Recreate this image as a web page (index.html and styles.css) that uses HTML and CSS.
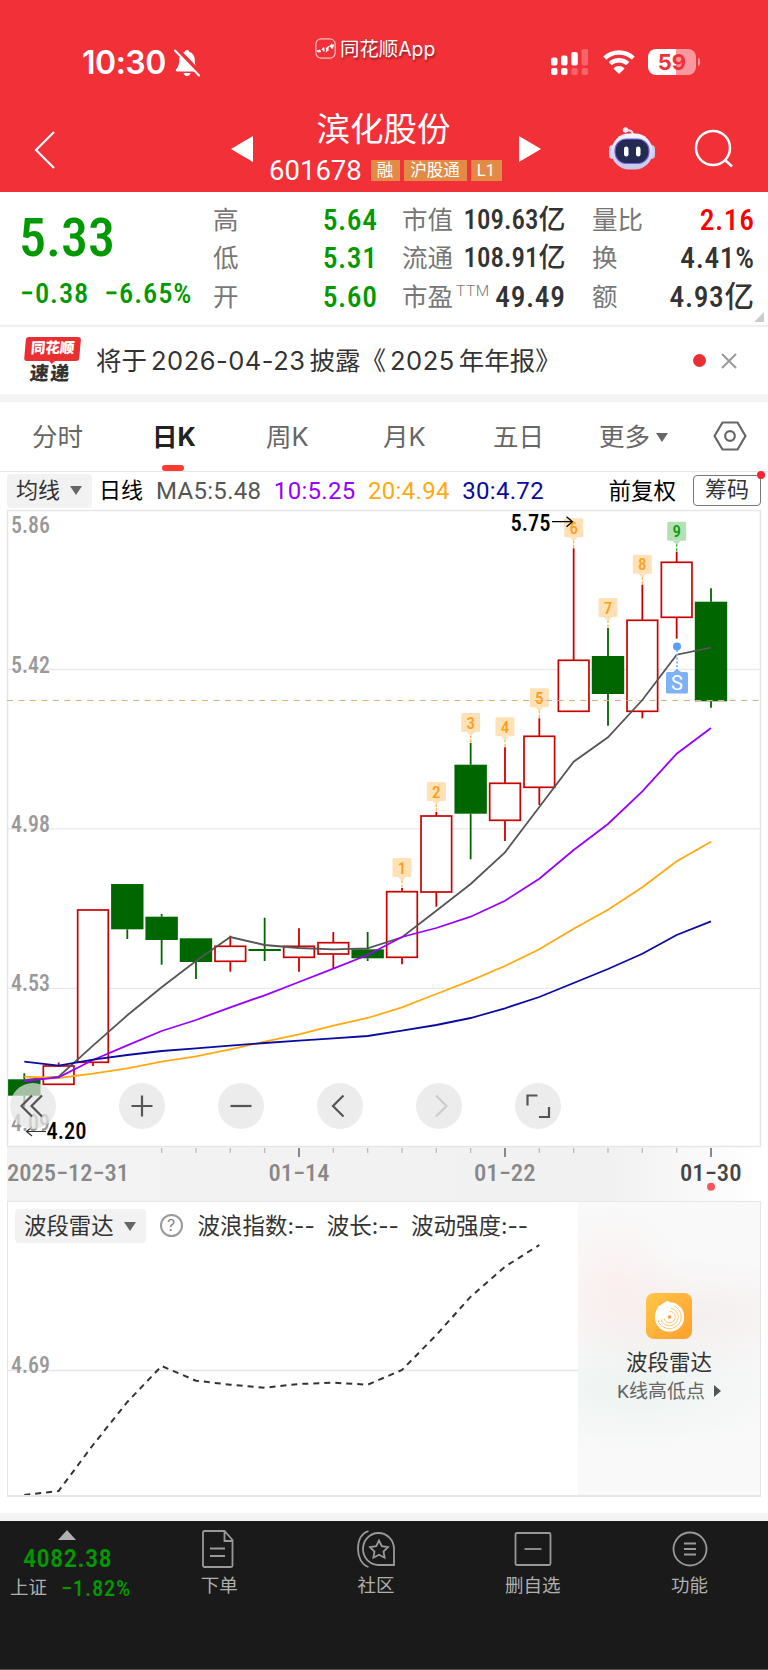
FILE: index.html
```html
<!DOCTYPE html>
<html lang="zh-CN">
<head>
  <meta charset="UTF-8" />
  <meta name="viewport" content="width=device-width, initial-scale=1.0" />
  <title>滨化股份 601678</title>
  <link rel="stylesheet" href="styles.css">
</head>
<body>
  <header class="header">
    <div class="status-bar">
      <div class="clock">
        <span class="time">10:30</span>
        <svg class="bell" width="28" height="28" viewBox="0 0 28 28">
          <path fill="#fff" d="M14 1c1.300 0 2.200.8 2.500 2 3.500 1 5.300 4 5.300 8 0 6 1.700 7.500 3.200 9.500.7 1-.1 2-1.200 2H4.200c-1.100 0-1.900-1-1.200-2C4.500 18.500 6.200 17 6.200 11c0-4 1.800-7 5.300-8C11.800 1.800 12.700 1 14 1zM10.500 24h7c-.3 1.900-1.700 3-3.500 3s-3.200-1.100-3.500-3z"/>
          <path d="M4 0L28 25" stroke="#f23038" stroke-width="4"/>
          <path d="M2 1.500L26 26.500" stroke="#fff" stroke-width="2" stroke-linecap="round"/>
        </svg>
      </div>
      <div class="app-mark">
        <svg width="21" height="21" viewBox="0 0 21 21">
          <rect x=".8" y=".8" width="19.400" height="19.400" rx="5.500" fill="none" stroke="#fff" stroke-opacity=".7" stroke-width="1.300"/>
          <path d="M2 12.500l1.500 1 1-1 1 1.500M7 12l1.500-1.500.5 3M11 11l2-1.500-1 3 1.500-1M15 9l1.500-2 .5 3.500 1.500-4" fill="none" stroke="#fff" stroke-width="1.600"/>
        </svg>
        <span>同花顺App</span>
      </div>
      <div class="indicators">
        <svg width="38" height="26" viewBox="0 0 38 26" fill="#fff">
          <rect x="0" y="8.500" width="6.500" height="8" rx="2"/>
          <rect x="10" y="6.500" width="6.500" height="10" rx="2"/>
          <rect x="20.300" y="3" width="6.500" height="13.500" rx="2"/>
          <rect x="30.600" y="0" width="6.500" height="16.500" rx="2" opacity=".25"/>
          <rect x="0" y="19" width="6.500" height="7" rx="2"/>
          <rect x="10" y="19" width="6.500" height="7" rx="2"/>
          <rect x="20.300" y="19" width="6.500" height="7" rx="2" opacity=".25"/>
          <rect x="30.600" y="19" width="6.500" height="7" rx="2" opacity=".25"/>
        </svg>
        <svg width="32" height="24" viewBox="0 0 32 24">
          <path d="M1.800 8.200a20.500 20.500 0 0 1 28.400 0M7.200 13.700a12.800 12.800 0 0 1 17.600 0" fill="none" stroke="#fff" stroke-width="4.400"/>
          <path d="M16 24l-5.600-5.600a8 8 0 0 1 11.200 0z" fill="#fff"/>
        </svg>
        <div class="battery"><span>59</span></div>
      </div>
    </div>
    <div class="title-bar">
      <svg class="back" width="22" height="40" viewBox="0 0 22 40"><path d="M20 2L2 20l18 18" fill="none" stroke="#fff" stroke-width="2.200"/></svg>
      <svg class="prev" width="22" height="26" viewBox="0 0 22 26"><path d="M22 0v26L0 13z" fill="#fff"/></svg>
      <div class="stock">
        <h1>滨化股份</h1>
        <div class="stock-code">
          <span class="code">601678</span>
          <span class="tag">融</span>
          <span class="tag">沪股通</span>
          <span class="tag">L1</span>
        </div>
      </div>
      <svg class="next" width="22" height="26" viewBox="0 0 22 26"><path d="M0 0v26l22-13z" fill="#fff"/></svg>
      <svg class="robot" width="46" height="43" viewBox="0 0 46 43">
        <defs>
          <linearGradient id="shell" x1="0" y1="0" x2="0" y2="1">
            <stop offset="0" stop-color="#f4f5ff"/>
            <stop offset="1" stop-color="#c3c8ec"/>
          </linearGradient>
        </defs>
        <path d="M17 3.500c4-1 6.500.5 7 4" fill="none" stroke="#dfe1fa" stroke-width="2"/>
        <circle cx="16.500" cy="3" r="2.700" fill="#e8eafc"/>
        <rect x="0" y="18" width="8" height="14" rx="4" fill="#c9cdf0"/>
        <rect x="38" y="18" width="8" height="14" rx="4" fill="#c9cdf0"/>
        <rect x="2.500" y="6.500" width="41" height="36" rx="17.500" fill="url(#shell)"/>
        <rect x="6" y="12" width="34" height="24.500" rx="11.500" fill="#232b52" stroke="#7d5fe0" stroke-width="1.200"/>
        <rect x="15" y="19.500" width="4.500" height="10" rx="2.200" fill="#fff"/>
        <rect x="27" y="19.500" width="4.500" height="10" rx="2.200" fill="#fff"/>
      </svg>
      <svg class="search" width="40" height="40" viewBox="0 0 40 40"><g fill="none" stroke="#fff" stroke-width="2.500"><circle cx="19" cy="19" r="17"/><path d="M31 31l7 6.500"/></g></svg>
    </div>
  </header>

  <section class="quote">
    <div class="price-box">
      <div class="price down">5.33</div>
      <div class="change down"><span>−0.38</span><span>−6.65%</span></div>
    </div>
    <dl class="stats stats-a">
      <dt>高</dt><dd class="down">5.64</dd>
      <dt>低</dt><dd class="down">5.31</dd>
      <dt>开</dt><dd class="down">5.60</dd>
    </dl>
    <dl class="stats stats-b">
      <dt>市值</dt><dd class="long">109.63亿</dd>
      <dt>流通</dt><dd class="long">108.91亿</dd>
      <dt>市盈<sup>TTM</sup></dt><dd>49.49</dd>
    </dl>
    <dl class="stats stats-c">
      <dt>量比</dt><dd class="up">2.16</dd>
      <dt>换</dt><dd>4.41%</dd>
      <dt>额</dt><dd>4.93亿</dd>
    </dl>
    <i class="corner"></i>
  </section>

  <section class="news">
    <div class="news-logo"><b>同花顺</b><em>速递</em></div>
    <p>将于<span class="d">2026-04-23</span>披露《<span class="d">2025</span>年年报》</p>
    <i class="dot"></i>
    <svg width="16" height="16" viewBox="0 0 16 16"><path d="M1 1l14 14M15 1L1 15" stroke="#999" stroke-width="2"/></svg>
  </section>

  <nav class="periods">
    <a>分时</a>
    <a class="active">日K</a>
    <a>周K</a>
    <a>月K</a>
    <a>五日</a>
    <a class="more">更多<i class="caret"></i></a>
    <svg width="34" height="30" viewBox="0 0 34 30"><g fill="none" stroke="#666" stroke-width="2.200"><path d="M9.500 1.500h15L32.500 15l-8 13.500h-15L1.500 15z" stroke-linejoin="round"/><circle cx="17" cy="15" r="4.800"/></g></svg>
  </nav>

  <div class="ma-row">
    <span class="select">均线<i class="caret"></i></span>
    <span class="line-name">日线</span>
    <span class="ma ma5">MA5:5.48</span>
    <span class="ma ma10">10:5.25</span>
    <span class="ma ma20">20:4.94</span>
    <span class="ma ma30">30:4.72</span>
    <span class="adjust">前复权</span>
    <span class="chips">筹码</span>
  </div>

  <section class="chart">
    <svg id="kline" width="768" height="692" viewBox="0 509 768 692"></svg>
    <div class="tools">
      <button><svg viewBox="0 0 46 46"><path d="M22 12.500L11.500 23 22 33.500M32 12.500L21.500 23 32 33.500"/></svg></button>
      <button><svg viewBox="0 0 46 46"><path d="M23 12.500v21M12.500 23h21"/></svg></button>
      <button><svg viewBox="0 0 46 46"><path d="M12.500 23h21"/></svg></button>
      <button><svg viewBox="0 0 46 46"><path d="M26.500 12.500L16 23l10.500 10.500"/></svg></button>
      <button class="off"><svg viewBox="0 0 46 46"><path d="M20 12.500L30.500 23 20 33.500"/></svg></button>
      <button><svg viewBox="0 0 46 46"><path d="M12.500 22.500V12.500h10M24 34h10V24"/></svg></button>
    </div>
  </section>

  <section class="radar">
    <div class="radar-main">
      <div class="radar-head">
        <span class="select">波段雷达<i class="caret"></i></span>
        <span class="help">?</span>
        <span>波浪指数:--</span>
        <span>波长:--</span>
        <span>波动强度:--</span>
      </div>
      <svg id="wave" width="570" height="252" viewBox="8 1243 570 252"></svg>
    </div>
    <aside class="radar-card">
      <svg width="46" height="46" viewBox="0 0 46 46">
        <defs>
          <linearGradient id="gold" x1="0" y1="0" x2="1" y2="1">
            <stop offset="0" stop-color="#ffc648"/>
            <stop offset="1" stop-color="#ff9f2c"/>
          </linearGradient>
        </defs>
        <rect width="46" height="46" rx="8" fill="url(#gold)"/>
        <circle cx="23.500" cy="24" r="14.700" fill="#fff"/>
        <path d="M11 14.500l9-6 3-.5v6z" fill="#fff"/>
        <g fill="none" stroke="#ffbd5c" stroke-width=".9">
          <path d="M23.500 18.300a5.700 5.700 0 1 1-5.500 7"/>
          <path d="M25 15.300a8.800 8.800 0 1 1-10 11"/>
          <path d="M28 13a11.800 11.800 0 1 1-16 14"/>
        </g>
        <circle cx="23.500" cy="24" r="1.800" fill="#ff9f2c"/>
      </svg>
      <strong>波段雷达</strong>
      <span>K线高低点<i></i></span>
    </aside>
  </section>

  <footer class="bottom-bar">
    <div class="index">
      <i></i>
      <b>4082.38</b>
      <div><span>上证</span><em>−1.82%</em></div>
    </div>
    <a>
      <svg width="39" height="38" viewBox="0 0 39 38"><path d="M4.500 1h20l8 9v25.500a1.500 1.500 0 0 1-1.500 1.500H4.500A1.500 1.500 0 0 1 3 35.500v-33A1.500 1.500 0 0 1 4.500 1zM24.500 1v10h8M10 18.500h15M10 26h15"/></svg>
      下单
    </a>
    <a>
      <svg width="41" height="38" viewBox="0 0 41 38"><path d="M12.500 1C5 3.500 2 11 2 19s3.500 15.500 10.500 18M38 19v16H23a15.500 16 0 1 1 15-16zM23 10.500l2.800 5.700 6.200.9-4.500 4.400 1.100 6.200-5.600-2.900-5.600 2.900 1.100-6.200-4.500-4.400 6.200-.9z"/></svg>
      社区
    </a>
    <a>
      <svg width="38" height="38" viewBox="0 0 38 38"><rect x="1.500" y="3" width="35" height="32" rx="1.500"/><path d="M10.500 19h17"/></svg>
      删自选
    </a>
    <a>
      <svg width="38" height="38" viewBox="0 0 38 38"><circle cx="19" cy="19" r="16.500"/><path d="M13 13.500h12M13 19h12M13 24.500h12"/></svg>
      功能
    </a>
  </footer>
  <script src="chart.js"></script>
</body>
</html>
```
FILE: styles.css
```css
* {
  box-sizing: border-box;
}
body {
  margin: 0;
  width: 768px;
  background: #fff;
  color: #333;
  font-family: Roboto, "Noto Sans CJK SC", sans-serif;
}
svg {
  display: block;
}
i, em {
  font-style: normal;
}
.down {
  color: #009900;
}
.up {
  color: #ff0000;
}

/* header */
.header {
  height: 192px;
  background: #f23038;
  color: #fff;
}
.status-bar {
  display: flex;
  justify-content: space-between;
  height: 100px;
  padding: 0 72px 0 82px;
}
.clock {
  display: flex;
  align-items: center;
  gap: 7px;
  width: 233px;
  height: 126px;
}
.time {
  font: 600 32px/40px Inter, sans-serif;
  letter-spacing: -0.5px;
}
.app-mark {
  display: flex;
  align-items: center;
  gap: 4px;
  height: 98px;
  flex: 1;
  font: 19.4px/24px Inter, "Noto Sans CJK SC", sans-serif;
  text-shadow: 1px 2px 2px rgba(0, 0, 0, 0.4);
}
.app-mark svg {
  margin-top: -2px;
}
.indicators {
  display: flex;
  align-items: center;
  gap: 13.5px;
  height: 124px;
}
.battery {
  position: relative;
  width: 48px;
  height: 26px;
  border-radius: 8px;
  background: linear-gradient(to right, #fff 28px, #f9999d 28px);
  color: #f23038;
  text-align: center;
  font: 700 22px/26px Inter, sans-serif;
}
.battery::after {
  content: "";
  position: absolute;
  right: -4px;
  top: 9px;
  width: 2px;
  height: 8px;
  border-radius: 0 2px 2px 0;
  background: #f9999d;
}
.title-bar {
  display: flex;
  align-items: center;
  height: 92px;
  padding-left: 34px;
}
.back {
  margin: 7px 175px 0 0;
}
.prev, .next {
  margin-top: 5px;
}
.stock {
  width: 266px;
  padding-right: 5px;
  text-align: center;
}
.stock h1 {
  margin: 0;
  font-size: 33.5px;
  line-height: 48px;
  font-weight: 400;
}
.stock-code {
  display: flex;
  align-items: center;
  justify-content: center;
  gap: 4px;
  height: 32px;
  margin-right: -4px;
}
.code {
  margin-right: 5px;
  font-size: 27.5px;
}
.tag {
  height: 21px;
  padding: 0 7px 0 6px;
  background: #e28b47;
  font-size: 16.5px;
  line-height: 21px;
}
.robot {
  margin: 5px 39px 0 68px;
}
.search {
  margin-top: 6px;
}

/* quote */
.quote {
  position: relative;
  display: flex;
  height: 135px;
  padding: 9px 14px 0 21px;
  border-bottom: 2px solid #f0f0f0;
}
.price-box {
  width: 192px;
}
.price {
  margin: 5px 0 0 -2px;
  font-size: 54px;
  font-weight: 500;
  line-height: 64px;
  font-stretch: 75%;
}
.change {
  display: flex;
  gap: 15px;
  margin: 8px 0 0 -1px;
  font-size: 28.5px;
  font-weight: 500;
  line-height: 32px;
  font-stretch: 75%;
  letter-spacing: 0.9px;
}
.stats {
  display: grid;
  grid-template-columns: 51px 1fr;
  grid-auto-rows: 38.3px;
  margin: 0;
  line-height: 38px;
}
.stats-a {
  width: 164px;
}
.stats-b {
  width: 163px;
  margin-left: 25px;
}
.stats-c {
  width: 162px;
  margin-left: 27px;
}
.stats dt {
  color: #777;
  font-size: 25.5px;
  white-space: nowrap;
}
.stats dd {
  margin: 0 -0.5px 0 0;
  text-align: right;
  font-size: 29.5px;
  font-weight: 500;
  font-stretch: 75%;
  letter-spacing: 0.6px;
  white-space: nowrap;
}
.stats .long {
  font-size: 27px;
  letter-spacing: 0;
}
.stats sup {
  margin-left: 3px;
  font-size: 15.5px;
  font-weight: 300;
  line-height: 0;
  letter-spacing: 0.5px;
}
.corner {
  position: absolute;
  right: 4px;
  bottom: 3px;
  border-left: 10px solid transparent;
  border-bottom: 10px solid #ccc;
}

/* news strip */
.news {
  display: flex;
  align-items: center;
  height: 75px;
  padding: 0 31px 0 24px;
  border-bottom: 8px solid #f4f4f4;
}
.news-logo {
  width: 55px;
  margin-right: 17px;
  text-align: center;
  transform: skewX(-5deg);
}
.news-logo b, .news-logo em {
  display: block;
  font-weight: 900;
}
.news-logo b {
  position: relative;
  height: 24px;
  border-radius: 3px;
  background: #ea2f33;
  color: #fff;
  font-size: 14.5px;
  line-height: 23px;
}
.news-logo b::after {
  content: "";
  position: absolute;
  left: 24px;
  top: 23px;
  border: 4px solid transparent;
  border-top-color: #ea2f33;
  border-bottom: 0;
}
.news-logo em {
  margin-top: 2px;
  font-size: 19px;
  line-height: 22px;
  letter-spacing: 1.5px;
}
.news p {
  flex: 1;
  margin: 0;
  font: 25.5px/36px Inter, "Noto Sans CJK SC", sans-serif;
  white-space: nowrap;
}
.news .d {
  margin: 0 4px;
  letter-spacing: 0.5px;
}
.dot {
  width: 13px;
  height: 13px;
  margin-right: 15px;
  border-radius: 50%;
  background: #ea2f33;
}

/* period tabs */
.periods {
  display: grid;
  grid-template-columns: 120px 114px 117px 110px 106px 114px 34px;
  align-items: center;
  height: 70px;
  padding-left: 32px;
  border-bottom: 1px solid #e8e8e8;
  color: #666;
  font: 25.5px/69px Inter, "Noto Sans CJK SC", sans-serif;
}
.periods svg {
  margin-top: -2px;
}
.periods a {
  position: relative;
  height: 69px;
}
.periods .active {
  color: #222;
  font-weight: 700;
}
.active::after {
  content: "";
  position: absolute;
  left: 10px;
  bottom: 0;
  width: 22px;
  height: 6px;
  border-radius: 3px;
  background: #fb3a30;
}
.caret {
  display: inline-block;
  margin-left: 6px;
  vertical-align: 4px;
  border: 6px solid transparent;
  border-top: 9px solid #666;
  border-bottom: 0;
}

/* moving averages */
.ma-row {
  display: flex;
  align-items: center;
  height: 37px;
  padding: 0 7px;
  font-size: 22px;
  line-height: 34px;
  white-space: nowrap;
}
.select {
  height: 34px;
  padding: 0 10px 0 9px;
  border-radius: 4px;
  background: #f2f2f2;
  font-size: 22px;
}
.select .caret {
  margin-left: 10px;
  vertical-align: 3px;
}
.line-name {
  margin: 0 13px 0 7px;
  color: #000;
}
.ma {
  margin-right: 12.5px;
  padding-top: 1px;
  font-size: 24px;
  letter-spacing: 0.3px;
}
.ma5 {
  color: #555;
}
.ma10 {
  color: #9900ff;
}
.ma20 {
  color: #ffaa11;
}
.ma30 {
  color: #0a0aa0;
}
.adjust {
  margin-left: auto;
  color: #000;
  font-size: 22.5px;
}
.chips {
  position: relative;
  width: 68px;
  height: 31px;
  margin-left: 17px;
  border: 1.5px solid #777;
  border-radius: 4px;
  text-align: center;
  line-height: 28px;
}
.chips::after {
  content: "";
  position: absolute;
  top: -5px;
  right: -5px;
  width: 8px;
  height: 8px;
  border-radius: 50%;
  background: #ff2030;
}

/* candle chart */
.chart {
  position: relative;
  height: 692px;
}
.tools {
  position: absolute;
  left: 9.5px;
  top: 573.5px;
  width: 552px;
  display: flex;
  justify-content: space-between;
}
.tools button {
  width: 46px;
  height: 46px;
  padding: 0;
  border: 0;
  border-radius: 50%;
  background: rgba(228, 228, 228, 0.714);
}
.tools button:first-child {
  margin-right: 10px;
}
.tools path {
  fill: none;
  stroke: #555;
  stroke-width: 2.2;
}
.tools .off path {
  stroke: #ccc;
}
.axis-text {
  font-size: 23px;
  font-weight: 500;
  font-stretch: 75%;
  fill: #999;
}
.date-text {
  fill: #888;
}
.strong {
  fill: #000;
}
.now {
  fill: #444;
}
.flag {
  font-size: 17px;
  font-weight: 500;
  font-stretch: 75%;
}

/* wave radar */
.radar {
  display: flex;
  width: 754px;
  height: 296px;
  margin: 0 0 16px 7px;
  border: 1px solid #e6e6e6;
  border-bottom-width: 2px;
}
.radar-main {
  width: 570px;
}
.radar-head {
  display: flex;
  align-items: center;
  gap: 12px;
  height: 41px;
  padding: 6px 0 0 7px;
  font: 22.5px/34px Inter, "Noto Sans CJK SC", sans-serif;
  white-space: nowrap;
}
.radar-head .select {
  font-size: 22.4px;
}
.help {
  width: 23px;
  height: 23px;
  margin: 0 3px 0 2px;
  border: 2px solid #999;
  border-radius: 50%;
  color: #888;
  text-align: center;
  font-size: 16px;
  line-height: 19px;
}
.radar-card {
  display: flex;
  flex: 1;
  flex-direction: column;
  align-items: center;
  padding-top: 91px;
  background:
    radial-gradient(ellipse 70px 75px at 38px 80px, rgba(255, 228, 228, 0.4), transparent),
    radial-gradient(ellipse 170px 60px at 110px 115px, rgba(240, 225, 225, 0.45), transparent),
    radial-gradient(ellipse 160px 65px at 60px 185px, rgba(228, 240, 235, 0.6), transparent),
    #f9f9f9;
}
.radar-card strong {
  margin-top: 9px;
  font-size: 21.5px;
  font-weight: 400;
  line-height: 30px;
}
.radar-card span {
  color: #666;
  font-size: 19px;
  line-height: 28px;
}
.radar-card i {
  display: inline-block;
  margin-left: 9px;
  vertical-align: 1px;
  border: 6px solid transparent;
  border-left: 7px solid #555;
  border-right: 0;
}

/* bottom bar */
.bottom-bar {
  display: flex;
  height: 157px;
  padding-top: 9px;
  border-top: 8px solid #f4f4f4;
  border-bottom: 1px solid #555;
  background: #1a1a1a;
  color: #b0b0b0;
}
.index {
  width: 141px;
}
.index i {
  display: block;
  width: 18px;
  margin-left: 58px;
  border: 9px solid transparent;
  border-bottom: 10px solid #b0b0b0;
  border-top: 0;
}
.index b {
  display: block;
  margin: 3px 0 0 23px;
  color: #009900;
  font-size: 26.5px;
  font-weight: 500;
  font-stretch: 75%;
  letter-spacing: 0.3px;
  line-height: 30px;
}
.index div {
  display: flex;
  align-items: center;
  gap: 14px;
  margin: 1px 0 0 10px;
  font-size: 18.5px;
  line-height: 28px;
}
.index em {
  color: #009900;
  font-size: 22.5px;
  font-weight: 500;
  font-stretch: 75%;
  letter-spacing: 0.8px;
}
.bottom-bar a {
  display: flex;
  flex: 1;
  flex-direction: column;
  align-items: center;
  font-size: 18.5px;
  line-height: 36px;
}
.bottom-bar svg {
  fill: none;
  stroke: #999;
  stroke-width: 1.8;
}
```
FILE: chart.js
```js
const STEP = 34.335;
const X0 = 24.3;
const RED = "#cc0000";
const GREEN = "#006600";

// direction, high, body top, body bottom, low
const candles = [
  ["g", 1073.3, 1079.3, 1095.7, 1107],
  ["r", 1062.5, 1066, 1084.3, 1084.3],
  ["r", 910, 910, 1062.3, 1066],
  ["g", 884, 884, 929.3, 939],
  ["g", 914, 916.7, 940, 964.7],
  ["g", 938.3, 938.3, 962, 979],
  ["r", 935.7, 946.3, 961.3, 971.7],
  ["g", 917.7, 949, 951, 961],
  ["r", 928.3, 946.3, 957.3, 971.7],
  ["r", 932, 942.7, 954, 968],
  ["g", 932, 949.3, 958.3, 961],
  ["r", 888, 891.7, 957.3, 964.3],
  ["r", 812, 816, 892, 906.7],
  ["g", 743, 764.7, 813.7, 859.3],
  ["r", 747.3, 783.3, 820.3, 841],
  ["r", 718.3, 736.3, 787.3, 805],
  ["r", 548.3, 660.3, 711.3, 711.3],
  ["g", 628, 656, 694, 725.7],
  ["r", 584.7, 620.3, 711.3, 718.3],
  ["r", 551.7, 562.3, 617.3, 638.7],
  ["g", 588.3, 601.7, 701.3, 707.7]
];

const averages = {
  "#555555": [1080, 1076.7, 1045.7, 1015.3, 987.3, 961, 937, 945, 948, 949.3, 948.3, 937.3, 910.7, 884, 852.3, 807, 761.7, 737.3, 700, 654.7, 647.7],
  "#ffaa11": [1076.7, 1078, 1073.7, 1068.3, 1061.7, 1056.3, 1049.3, 1041.7, 1034.3, 1025.7, 1018, 1007.3, 994, 980.7, 966, 949.3, 928.7, 909.7, 887.3, 861.3, 841.7],
  "#9900ff": [1081, 1077.3, 1060, 1045.3, 1031, 1020, 1007.3, 995.3, 982, 968.7, 955, 937, 928, 916.7, 900.7, 878.7, 850, 824, 791.3, 753.7, 728],
  "#0a0aa0": [1061.7, 1065.7, 1059.7, 1055, 1051, 1048.3, 1045.7, 1043, 1040.7, 1038.3, 1036, 1030.7, 1025, 1018, 1008.3, 997, 983, 969, 953.7, 935, 921.3]
};

const wave = [1495, 1491, 1445, 1402, 1366, 1380.7, 1384.7, 1387.7, 1384, 1382.7, 1384.7, 1370, 1335, 1296.7, 1266.7, 1245];

const px = i => X0 + i * STEP;
const points = list => list.map((y, i) => `${px(i)},${y}`).join(" ");
const line = (x1, y1, x2, y2, color, more = "") =>
  `<line x1="${x1}" y1="${y1}" x2="${x2}" y2="${y2}" stroke="${color}" ${more}/>`;
const label = (x, y, width, value, cls = "") =>
  `<text class="axis-text ${cls}" x="${x}" y="${y}" textLength="${width}" lengthAdjust="spacingAndGlyphs">${value}</text>`;

function drawKline() {
  let s = `<defs><linearGradient id="fade"><stop offset="0" stop-color="#f3f3f3"/><stop offset=".8" stop-color="#f1f1f1"/><stop offset="1" stop-color="#fff"/></linearGradient></defs>`;
  s += `<rect x="7" y="1147" width="754" height="55" fill="url(#fade)"/>`;
  s += `<rect x="7.500" y="510.500" width="753" height="636" fill="none" stroke="#e6e6e6" stroke-width="1.500"/>`;
  [669.5, 828.8, 988.3].forEach(y => s += line(8, y, 760, y, "#e9e9e9", 'stroke-width="1.300"'));

  s += label(11, 532.7, 39, "5.86");
  s += label(11, 672.7, 39, "5.42");
  s += label(11, 831.7, 39, "4.98");
  s += label(11, 991, 39, "4.53");
  s += label(11, 1131.3, 39, "4.09");

  candles.forEach(([dir, high, top, bottom, low], i) => {
    const x = px(i);
    const color = dir === "r" ? RED : GREEN;
    s += line(x, high, x, top, color, 'stroke-width="1.800"');
    s += line(x, bottom, x, low, color, 'stroke-width="1.800"');
    s += dir === "r"
      ? `<rect x="${x - 15.3}" y="${top}" width="30.600" height="${bottom - top}" fill="#fff" stroke="${RED}" stroke-width="1.700"/>`
      : `<rect x="${x - 16.2}" y="${top}" width="32.400" height="${bottom - top}" fill="${GREEN}"/>`;
    // nine-turn flags sit 30px above the high
    if (i >= 11 && i <= 19) {
      const n = i - 10;
      const y = high - 30;
      const bg = n === 9 ? "#b3e1b3" : "#ffe1b8";
      const fg = n === 9 ? "#0a9a0a" : "#ff9f1a";
      s += line(x, y + 22, x, high, fg, 'stroke-width="1.300" stroke-dasharray="3 1.500" opacity=".8"');
      s += `<rect x="${x - 9.5}" y="${y}" width="19" height="19" rx="1.500" fill="${bg}"/>`;
      s += `<path d="M${x - 4} ${y + 19}h8l-4 4z" fill="${bg}"/>`;
      s += `<text class="flag" x="${x}" y="${y + 15.7}" text-anchor="middle" fill="${fg}">${n}</text>`;
    }
  });

  s += line(7, 700.5, 760, 700.5, "#dfb27c", 'stroke-dasharray="6 5.470"');

  for (const color in averages) {
    s += `<polyline points="${points(averages[color])}" fill="none" stroke="${color}" stroke-width="1.800"/>`;
  }

  // trade mark
  s += `<circle cx="677" cy="646.500" r="4" fill="#5c9ff0"/>`;
  s += line(677, 650, 677, 670, "#7fb2f5", 'stroke-width="1.800" stroke-dasharray="2 1.800"');
  s += `<path d="M673 672l4-3 4 3z" fill="#7fb2f5"/><rect x="666" y="672" width="22" height="21.500" rx="1.500" fill="#7fb2f5"/>`;
  s += `<text x="677" y="690" text-anchor="middle" font-size="20" fill="#fff">S</text>`;

  s += label(510.5, 530.7, 40, "5.75", "strong");
  s += `<path d="M552 521.700h20M566.500 516.700l6 5-6 5" fill="none" stroke="#000" stroke-width="1.300"/>`;
  s += label(46.5, 1139.3, 40, "4.20", "strong");
  s += `<path d="M46 1131.500H26.500M32 1127l-5.500 4.500 5.500 4.500" fill="none" stroke="#333" stroke-width="1.200"/>`;

  for (let i = 4; i <= 20; i++) {
    const big = i % 6 === 2;
    s += line(px(i), 1148, px(i), big ? 1157 : 1153, big ? "#888" : "#bbb", `stroke-width="${big ? 2 : 1.3}"`);
  }
  s += label(7, 1181, 122, "2025−12−31", "date-text");
  s += label(268.5, 1181, 61, "01−14", "date-text");
  s += label(474, 1181, 61.5, "01−22", "date-text");
  s += label(680, 1181, 61.5, "01−30", "now");
  s += `<circle cx="711" cy="1186.700" r="4" fill="#f5585c"/>`;
  document.getElementById("kline").innerHTML = s;
}

function drawWave() {
  let s = line(8, 1370.5, 578, 1370.5, "#e6e6e6", 'stroke-width="1.300"');
  s += label(11, 1372.7, 39, "4.69");
  s += `<polyline points="${points(wave)}" fill="none" stroke="#333" stroke-width="2" stroke-dasharray="6 5"/>`;
  document.getElementById("wave").innerHTML = s;
}

drawKline();
drawWave();
```
